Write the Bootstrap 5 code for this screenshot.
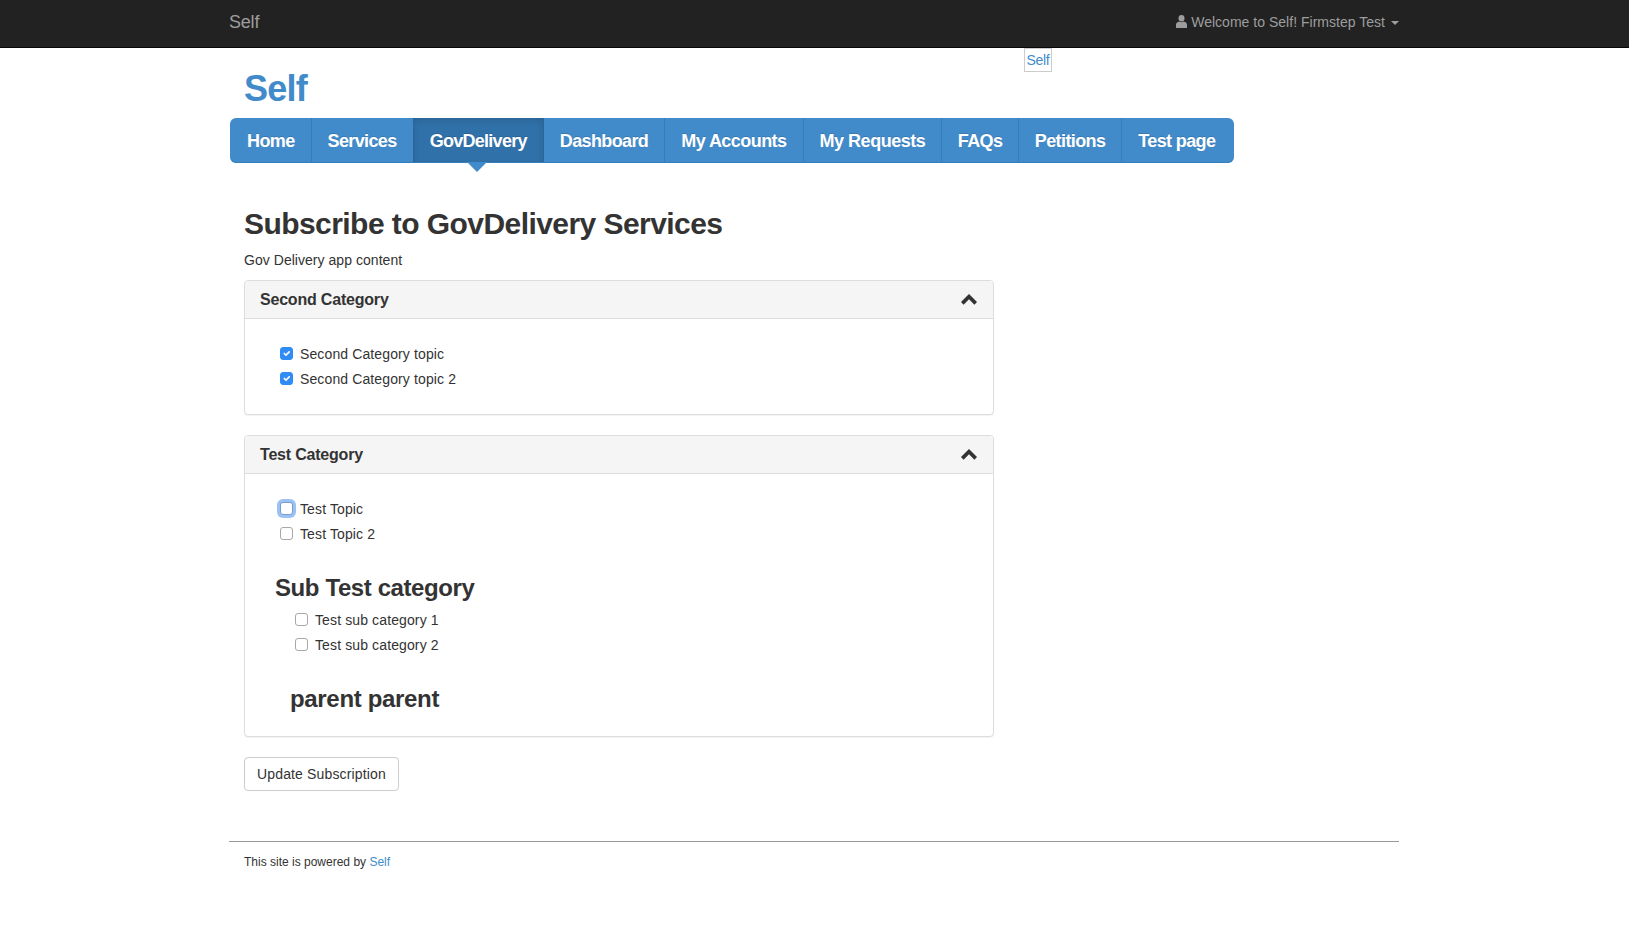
<!DOCTYPE html>
<html lang="en">
<head>
<meta charset="utf-8">
<title>Subscribe to GovDelivery Services</title>
<link rel="stylesheet" href="https://cdn.jsdelivr.net/npm/bootstrap@5.3.0/dist/css/bootstrap.min.css">
<style>
body{font-family:"Liberation Sans",Arial,sans-serif;font-size:14px;line-height:20px;color:#333;background:#fff}
.top-bar{background:#222;border-bottom:1px solid #080808;height:48px;padding:0}
.page-wrap{width:1170px;max-width:none;padding:0;margin:0 0 0 229px}
.top-bar .page-wrap{height:47px}
.top-brand{color:#9d9d9d;font-size:18px;letter-spacing:-.2px;text-decoration:none;line-height:44px}
.top-user{color:#9d9d9d;font-size:14px;letter-spacing:.02px;text-decoration:none;line-height:44px}
.top-user svg{margin-right:4px;vertical-align:-1px}
.user-caret{display:inline-block;margin-left:6px;border-top:4px solid #9d9d9d;border-left:4px solid transparent;border-right:4px solid transparent;vertical-align:middle}
.site-head{width:823px;height:70px;padding-left:15px}
.site-title{font-size:36px;font-weight:700;line-height:40px;margin:21px 0 0;color:#428bca;letter-spacing:-.8px}
.site-title a{color:inherit;text-decoration:none}
.logo-box{border:1px solid #ccc;height:24px;width:28px;line-height:22px;text-align:center;color:#428bca;text-decoration:none;letter-spacing:-.3px;margin-top:0}
.main-tabs{width:1004px;height:45px;margin-left:1px;background:#428bca;border-bottom:1px solid #357ebd;border-radius:6px;flex-wrap:nowrap}
.main-tabs .nav-link{position:relative;height:44px;padding:0 16px;line-height:46px;color:#fff;font-size:18px;font-weight:700;letter-spacing:-.62px;border-right:1px solid #357ebd;white-space:nowrap;text-shadow:0 -1px 0 rgba(0,0,0,.15)}
.main-tabs .nav-item:last-child .nav-link{border-right:0}
.main-tabs .nav-item:first-child .nav-link{border-radius:6px 0 0 6px;padding-left:17px}
.main-tabs .nav-item:nth-child(5) .nav-link{letter-spacing:-.55px}
.main-tabs .nav-item:nth-child(6) .nav-link{letter-spacing:-.48px}
.main-tabs .nav-item:nth-child(7) .nav-link{padding:0 15.5px}
.main-tabs .nav-link.active{background:#3071a9;box-shadow:inset 0 3px 6px rgba(0,0,0,.12);border-left:1px solid #2b6699;border-right:1px solid #2b6699;margin-left:-1px;letter-spacing:-.72px}
.main-tabs .nav-link.active::after{content:"";position:absolute;left:53px;top:100%;border-top:10px solid #428bca;border-left:10px solid transparent;border-right:10px solid transparent}
.content-col{width:750px;margin-left:15px;padding-top:44px}
.page-h{font-size:30px;font-weight:700;line-height:33px;margin:0 0 10px;letter-spacing:-.56px;color:#333}
.intro{margin:0 0 10px;letter-spacing:.04px;color:#333}
.cat-card{border:1px solid #ddd;border-radius:4px;box-shadow:0 1px 1px rgba(0,0,0,.05);margin-bottom:20px;--bs-card-bg:#fff}
.cat-head{background:#f5f5f5;border-bottom:1px solid #ddd;height:38px;padding:0 16px 0 15px;border-radius:3px 3px 0 0}
.cat-title{font-size:16px;font-weight:700;letter-spacing:-.2px;line-height:44px;margin:0;color:#333}
.cat-body{padding:22px 15px 23px}
.topic{height:25px;margin:0;padding:0 0 0 20px;gap:7px;color:#333;letter-spacing:.12px}
.topic-in{padding-left:35px}
.topic .form-check-input{width:13px;height:13px;margin:0;flex:none;border:1px solid #a8a8a8;border-radius:3px;background-color:#fff;float:none}
.topic .form-check-input:checked{background-color:#2f8cf5;border-color:#2f8cf5}
.topic .focus-look{box-shadow:0 0 0 3px rgba(88,152,238,.6);border-color:#7a9cc8}
.sub-h{font-size:24px;font-weight:700;line-height:26px;margin:29px 0 6px;letter-spacing:-.4px;color:#333}
.sub-a{padding-left:15px}
.sub-b{padding-left:30px;margin-top:29px;margin-bottom:1px;letter-spacing:-.33px}
.upd-btn{--bs-btn-padding-x:12px;--bs-btn-padding-y:6px;--bs-btn-font-size:14px;--bs-btn-line-height:20px;--bs-btn-border-color:#ccc;--bs-btn-color:#333;--bs-btn-border-radius:4px;letter-spacing:.15px}
.foot-rule{margin:50px 0 0;border:0;border-top:1px solid #999;opacity:1}
.foot-text{font-size:12px;line-height:18px;margin:11px 0 0 15px;color:#333}
.foot-text a{color:#428bca;text-decoration:none}
</style>
</head>
<body>
<nav class="navbar top-bar">
  <div class="page-wrap d-flex justify-content-between">
    <a class="top-brand" href="#">Self</a>
    <a class="top-user" href="#"><svg width="11" height="13" viewBox="0 0 11 13" fill="#9d9d9d" aria-hidden="true"><ellipse cx="5.5" cy="3.2" rx="3" ry="3.2"/><path d="M0 13V9.800C0 7.900 1.600 7 3.400 6.600c1.200.7 3 .7 4.200 0C9.400 7 11 7.900 11 9.800V13z"/></svg>Welcome to Self! Firmstep Test<span class="user-caret"></span></a>
  </div>
</nav>
<div class="page-wrap">
  <header class="site-head d-flex justify-content-between align-items-start">
    <h1 class="site-title"><a href="#">Self</a></h1>
    <a class="logo-box" href="#">Self</a>
  </header>
  <ul class="nav main-tabs">
    <li class="nav-item"><a class="nav-link" href="#">Home</a></li>
    <li class="nav-item"><a class="nav-link" href="#">Services</a></li>
    <li class="nav-item"><a class="nav-link active" href="#">GovDelivery</a></li>
    <li class="nav-item"><a class="nav-link" href="#">Dashboard</a></li>
    <li class="nav-item"><a class="nav-link" href="#">My Accounts</a></li>
    <li class="nav-item"><a class="nav-link" href="#">My Requests</a></li>
    <li class="nav-item"><a class="nav-link" href="#">FAQs</a></li>
    <li class="nav-item"><a class="nav-link" href="#">Petitions</a></li>
    <li class="nav-item"><a class="nav-link" href="#">Test page</a></li>
  </ul>
  <main class="content-col">
    <h2 class="page-h">Subscribe to GovDelivery Services</h2>
    <p class="intro">Gov Delivery app content</p>
    <section class="card cat-card">
      <div class="cat-head d-flex justify-content-between align-items-center">
        <h3 class="cat-title">Second Category</h3>
        <svg width="16" height="11" viewBox="0 0 16 11" fill="#333" aria-hidden="true"><path d="M8 0l8 8-2.600 2.700L8 5.300 2.600 10.700 0 8z"/></svg>
      </div>
      <div class="cat-body">
        <label class="topic d-flex align-items-center"><input class="form-check-input" type="checkbox" checked>Second Category topic</label>
        <label class="topic d-flex align-items-center"><input class="form-check-input" type="checkbox" checked>Second Category topic 2</label>
      </div>
    </section>
    <section class="card cat-card">
      <div class="cat-head d-flex justify-content-between align-items-center">
        <h3 class="cat-title">Test Category</h3>
        <svg width="16" height="11" viewBox="0 0 16 11" fill="#333" aria-hidden="true"><path d="M8 0l8 8-2.600 2.700L8 5.300 2.600 10.700 0 8z"/></svg>
      </div>
      <div class="cat-body">
        <label class="topic d-flex align-items-center"><input class="form-check-input focus-look" type="checkbox">Test Topic</label>
        <label class="topic d-flex align-items-center"><input class="form-check-input" type="checkbox">Test Topic 2</label>
        <h4 class="sub-h sub-a">Sub Test category</h4>
        <label class="topic topic-in d-flex align-items-center"><input class="form-check-input" type="checkbox">Test sub category 1</label>
        <label class="topic topic-in d-flex align-items-center"><input class="form-check-input" type="checkbox">Test sub category 2</label>
        <h4 class="sub-h sub-b">parent parent</h4>
      </div>
    </section>
    <button type="button" class="btn btn-light bg-white upd-btn">Update Subscription</button>
  </main>
  <hr class="foot-rule">
  <p class="foot-text">This site is powered by <a href="#">Self</a></p>
</div>
<script src="https://cdn.jsdelivr.net/npm/bootstrap@5.3.0/dist/js/bootstrap.bundle.min.js"></script>
</body>
</html>
